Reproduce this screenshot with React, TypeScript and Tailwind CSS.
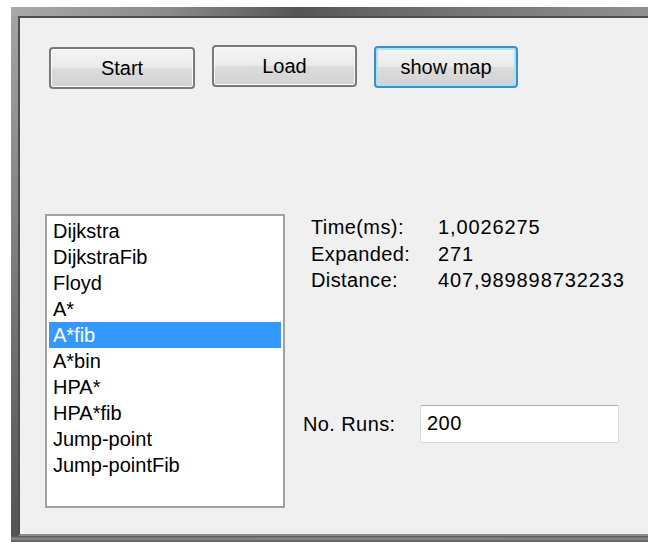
import { useState } from 'react'

const algorithms = [
  'Dijkstra',
  'DijkstraFib',
  'Floyd',
  'A*',
  'A*fib',
  'A*bin',
  'HPA*',
  'HPA*fib',
  'Jump-point',
  'Jump-pointFib',
]

const stats = [
  { label: 'Time(ms):', value: '1,0026275' },
  { label: 'Expanded:', value: '271' },
  { label: 'Distance:', value: '407,989898732233' },
]

// Classic WinForms push button
function WinButton({ label, focused = false, className = '' }: { label: string; focused?: boolean; className?: string }) {
  return (
    <button
      className={`h-[42px] rounded-[4px] border-2 text-[20px] leading-none text-black bg-[linear-gradient(#f4f4f4,#ebebeb_48%,#dcdcdc_52%,#d2d2d2)] ${
        focused
          ? 'border-[#3b8ed0] shadow-[inset_0_0_0_2px_#a9e3f7]'
          : 'border-[#7a7a7a] shadow-[inset_0_0_0_1px_#fbfbfb]'
      } ${className}`}
    >
      {label}
    </button>
  )
}

export default function App() {
  const [selected, setSelected] = useState(4)

  return (
    <div className="h-[542px] w-[648px] overflow-hidden bg-white pt-[7px] pl-[11px] font-['Liberation_Sans',Arial,sans-serif] text-black">
      <div className="flex h-full flex-col">
        {/* window frame, top edge */}
        <div className="h-[9px] shrink-0 bg-[linear-gradient(to_right,#a9a9a9,#8a8a8a_25%,#555555_45%,#6a6a6a_60%,#909090)]" />
        <div className="flex min-h-0 flex-1">
          {/* window frame, left edge */}
          <div className="w-[7px] shrink-0 bg-[linear-gradient(#a3a3a3,#7a7a7a_50%,#545454)]" />
          <div className="flex flex-1 flex-col border-t-2 border-l-2 border-b-2 border-t-[#4e4e4e] border-l-[#4e4e4e] border-b-[#8c8c8c] bg-[#f0f0f0]">
            {/* toolbar buttons */}
            <div className="flex items-start gap-[17px] pt-[27px] pl-[29px]">
              <WinButton label="Start" className="mt-[2px] w-[146px]" />
              <WinButton label="Load" className="w-[145px]" />
              <WinButton label="show map" focused className="mt-[1px] h-[41px] w-[144px]" />
            </div>

            <div className="mt-[125px] flex pl-[25px]">
              {/* algorithm list */}
              <ul className="h-[294px] w-[240px] border-2 border-[#a2a2a2] bg-white p-[2px]">
                {algorithms.map((name, i) => (
                  <li
                    key={name}
                    onClick={() => setSelected(i)}
                    className={`h-[26px] pl-[4px] text-[20px] leading-[26px] ${
                      i === selected ? 'bg-[#3399ff] text-white' : 'text-black'
                    }`}
                  >
                    {name}
                  </li>
                ))}
              </ul>

              {/* results */}
              <div className="ml-[18px] flex flex-col">
                <div className="ml-[8px]">
                  {stats.map((s) => (
                    <div key={s.label} className="flex h-[26.5px] text-[20px] leading-[26.5px]">
                      <span className="w-[127px] tracking-[0.4px]">{s.label}</span>
                      <span className="tracking-[0.9px]">{s.value}</span>
                    </div>
                  ))}
                </div>

                <div className="mt-[111px] flex items-center">
                  <span className="w-[117px] text-[20px] tracking-[0.4px]">No. Runs:</span>
                  <input
                    defaultValue="200"
                    className="h-[38px] w-[199px] rounded-[2px] border border-[#d5d9df] border-t-[#abadb3] bg-white pl-[6px] text-[20px] tracking-[0.5px] text-black outline-none"
                  />
                </div>
              </div>
            </div>
          </div>
        </div>
        {/* window frame, bottom edge */}
        <div className="h-[6px] shrink-0 bg-[linear-gradient(#4f4f4f,#8a8a8a_40%,#5a5a5a)]" />
      </div>
    </div>
  )
}
